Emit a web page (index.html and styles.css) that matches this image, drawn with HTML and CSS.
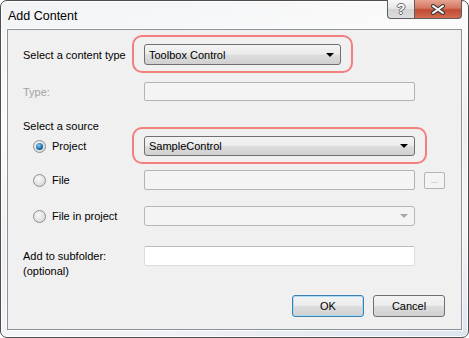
FILE: index.html
```html
<!DOCTYPE html>
<html lang="en">
<head>
    <meta charset="UTF-8">
    <title>Add Content</title>
    <link rel="stylesheet" href="styles.css">
</head>
<body>
<div class="window">
    <!-- Title bar -->
    <div class="titlebar">
        <span class="title">Add Content</span>
        <div class="caption-buttons">
            <span class="cap-btn help">?</span>
            <span class="cap-btn close">
                <svg width="16" height="11" viewBox="0 0 16 11">
                    <path d="M3 2 L13 9 M13 2 L3 9" stroke="#3b3b3b" stroke-width="4" stroke-linecap="round"/>
                    <path d="M3 2 L13 9 M13 2 L3 9" stroke="#fff" stroke-width="2" stroke-linecap="round"/>
                </svg>
            </span>
        </div>
    </div>

    <div class="client">
        <div class="row row-first">
            <span class="label">Select a content type</span>
            <div class="control short highlighted">
                <div class="combo">Toolbox Control<span class="arrow"></span></div>
            </div>
        </div>

        <div class="row row-type">
            <span class="label disabled">Type:</span>
            <div class="control">
                <div class="textbox disabled-box"></div>
            </div>
        </div>

        <div class="row row-caption">
            <span class="label">Select a source</span>
        </div>

        <div class="row row-project">
            <label class="label radio-label"><span class="radio checked"></span>Project</label>
            <div class="control highlighted">
                <div class="combo">SampleControl<span class="arrow"></span></div>
            </div>
        </div>

        <div class="row row-file">
            <label class="label radio-label"><span class="radio"></span>File</label>
            <div class="control">
                <div class="textbox disabled-box"></div>
            </div>
            <span class="browse">...</span>
        </div>

        <div class="row row-fip">
            <label class="label radio-label"><span class="radio"></span>File in project</label>
            <div class="control">
                <div class="combo disabled-combo"><span class="arrow"></span></div>
            </div>
        </div>

        <div class="row row-folder">
            <span class="label two-line">Add to subfolder:<br>(optional)</span>
            <div class="control">
                <div class="textbox"></div>
            </div>
        </div>

        <div class="button-row">
            <span class="button default">OK</span>
            <span class="button">Cancel</span>
        </div>
    </div>
</div>
</body>
</html>
```

FILE: styles.css
```css
html, body {
    margin: 0;
    padding: 0;
    background-color: #fff;
}

body {
    font-family: "Liberation Sans", Arial, sans-serif;
    font-size: 11px;
    color: #000;
}

/* Window frame */
.window {
    box-sizing: border-box;
    width: 469px;
    height: 338px;
    display: flex;
    flex-direction: column;
    padding: 0 6px 7px 6px;
    border: 1px solid #4d4d4d;
    border-radius: 7px;
    background: linear-gradient(165deg, #f1f3f5 0%, #fbfbfb 30%, #eceff2 55%, #f4f5f7 75%, #dde5ee 100%);
    box-shadow: inset 0 0 0 1px rgba(255, 255, 255, 0.85);
}

.titlebar {
    height: 28px;
    display: flex;
    align-items: flex-start;
    justify-content: space-between;
    flex-shrink: 0;
}

.title {
    font-size: 12.5px;
    margin: 8px 0 0 1px;
}

.caption-buttons {
    display: flex;
    margin-top: -1px;
}

.cap-btn {
    height: 19px;
    display: flex;
    align-items: center;
    justify-content: center;
    border: 1px solid #5d5d5d;
    border-top: none;
    box-sizing: border-box;
}

.help {
    width: 27px;
    border-right: none;
    border-radius: 0 0 0 4px;
    background: linear-gradient(#f7f7f7, #e4e4e4 50%, #d3d3d3 51%, #dcdcdc);
    color: #fff;
    font-size: 14px;
    font-weight: bold;
    text-shadow: 1px 0 0 #666, -1px 0 0 #666, 0 1px 0 #666, 0 -1px 0 #666;
}

.close {
    width: 48px;
    border-radius: 0 0 4px 0;
    background: linear-gradient(#e8a493, #d47760 45%, #c24a33 55%, #d56a4f);
}

/* Client area */
.client {
    flex: 1;
    display: flex;
    flex-direction: column;
    padding: 14px 15px 12px 15px;
    border: 1px solid #8d939a;
    background-color: #f0f0f0;
    box-shadow: 0 0 0 1px rgba(255, 255, 255, 0.7);
}

.row {
    display: grid;
    grid-template-columns: 112px 271px auto;
    column-gap: 9px;
    align-items: center;
}

.row-first { height: 21px; }
.row-type { margin-top: 17px; height: 19px; }
.row-caption { margin-top: 17px; height: 16px; }
.row-project { margin-top: 2px; height: 20px; }
.row-file { margin-top: 14px; height: 20px; }
.row-fip { margin-top: 16px; height: 20px; }
.row-folder { margin-top: 20px; align-items: start; }
.row-folder .control { height: 20px; }

.label {
    white-space: nowrap;
}

.label.disabled {
    color: #a3a3a3;
}

.two-line {
    line-height: 15px;
    margin-top: 3px;
}

.radio-label {
    display: flex;
    align-items: center;
    padding-left: 10px;
}

.radio {
    box-sizing: border-box;
    width: 13px;
    height: 13px;
    border-radius: 50%;
    border: 1px solid #8f8f8f;
    background: radial-gradient(circle at 40% 35%, #fafafa, #dcdcdc 70%, #cfcfcf);
    margin-right: 6px;
    position: relative;
}

.radio.checked::after {
    content: "";
    position: absolute;
    left: 2px;
    top: 2px;
    width: 7px;
    height: 7px;
    border-radius: 50%;
    background: radial-gradient(circle at 40% 35%, #8fd0f5, #1c6fb0 55%, #0a3f70);
}

/* Controls */
.control {
    position: relative;
    height: 100%;
}

.control.short {
    width: 197px;
}

.highlighted::after {
    content: "";
    position: absolute;
    top: -9px;
    bottom: -8px;
    left: -12px;
    right: -12px;
    border: 2px solid #f47e7e;
    border-radius: 10px;
}

.combo {
    box-sizing: border-box;
    height: 100%;
    display: flex;
    align-items: center;
    justify-content: space-between;
    padding: 0 6px 0 4px;
    border: 1px solid #707070;
    border-radius: 3px;
    background: linear-gradient(#f4f4f4, #ebebeb 48%, #dddddd 52%, #d0d0d0);
}

.arrow {
    margin-left: auto;
    width: 0;
    height: 0;
    border-left: 4px solid transparent;
    border-right: 4px solid transparent;
    border-top: 4px solid #000;
}

.disabled-combo {
    border-color: #b7b7b7;
    background: #f4f4f4;
}

.disabled-combo .arrow {
    border-top-color: #a8a8a8;
}

.textbox {
    box-sizing: border-box;
    height: 100%;
    border: 1px solid #d9dde2;
    border-top-color: #b9bdc3;
    border-radius: 2px;
    background-color: #fff;
}

.textbox.disabled-box {
    border-color: #b4b4b4;
    background-color: #f4f4f4;
}

.browse {
    box-sizing: border-box;
    width: 21px;
    height: 17px;
    display: flex;
    align-items: flex-end;
    justify-content: center;
    padding-bottom: 3px;
    border: 1px solid #b4b4b4;
    border-radius: 2px;
    background-color: #f4f4f4;
    color: #a3a3a3;
    font-size: 9px;
    line-height: 1;
}

/* Dialog buttons */
.button-row {
    margin-top: auto;
    display: flex;
    justify-content: flex-end;
    gap: 9px;
    padding-right: 1px;
}

.button {
    box-sizing: border-box;
    width: 72px;
    height: 22px;
    display: flex;
    align-items: center;
    justify-content: center;
    border: 1px solid #707070;
    border-radius: 3px;
    background: linear-gradient(#f4f4f4, #ebebeb 48%, #dddddd 52%, #d0d0d0);
}

.button.default {
    border-color: #3c7fb1;
    box-shadow: inset 0 0 0 1px #a9dcf5;
}
```
